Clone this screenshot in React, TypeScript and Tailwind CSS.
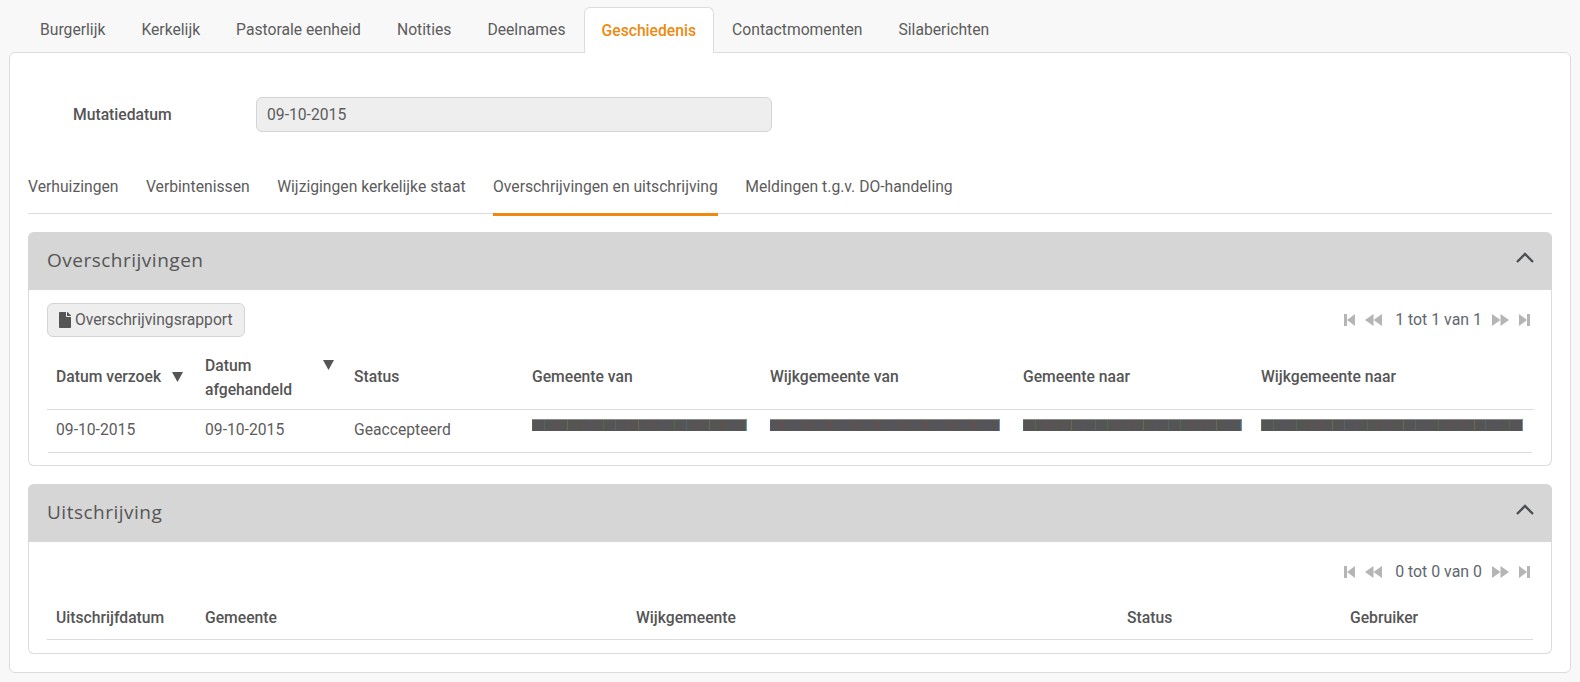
import { FaFile } from "react-icons/fa";

const mainTabs = ["Burgerlijk", "Kerkelijk", "Pastorale eenheid", "Notities", "Deelnames", "Geschiedenis", "Contactmomenten", "Silaberichten"];
const subTabs = ["Verhuizingen", "Verbintenissen", "Wijzigingen kerkelijke staat", "Overschrijvingen en uitschrijving", "Meldingen t.g.v. DO-handeling"];

const stripeColors = ["#6b4a4a", "#4f6b4f", "#5b4f75", "#4f6670", "#6a6a4a", "#704a5a"];

// redacted cell: dark bar with thin coloured stripes
const Redacted = ({ width, seed }: { width: number; seed: number }) => {
    const stripes = [];
    for (let i = 0; i < Math.floor(width / 11); i++) {
        stripes.push(stripeColors[(i * 7 + seed + (i % 3) * seed) % stripeColors.length]);
    }
    return (
        <div className="flex justify-between h-3 bg-[#555555] border-t border-[#8a8a8a] border-r border-r-[#5b93c7] overflow-hidden" style={{ width }}>
            {stripes.map((c, i) => (
                <span key={i} className="w-px h-full" style={{ backgroundColor: c }} />
            ))}
        </div>
    );
};

const Pager = ({ label }: { label: string }) => (
    <div className="flex items-center justify-end h-[34px] pr-[21px] text-[#5f6770]">
        <svg width="11" height="12" viewBox="0 0 11 12" fill="#b5b5b5"><rect x="0" y="0" width="3" height="12" /><polygon points="11,0 11,12 3,6" /></svg>
        <svg width="17" height="12" viewBox="0 0 17 12" fill="#b5b5b5" className="ml-[10px]"><polygon points="8.5,0 8.5,12 0,6" /><polygon points="17,0 17,12 8.5,6" /></svg>
        <span className="ml-[13px] mr-[10px] leading-none text-[15.9px]">{label}</span>
        <svg width="17" height="12" viewBox="0 0 17 12" fill="#b5b5b5"><polygon points="0,0 0,12 8.5,6" /><polygon points="8.5,0 8.5,12 17,6" /></svg>
        <svg width="11" height="12" viewBox="0 0 11 12" fill="#b5b5b5" className="ml-[10px]"><polygon points="0,0 0,12 8,6" /><rect x="8" y="0" width="3" height="12" /></svg>
    </div>
);

const SectionHeader = ({ title }: { title: string }) => (
    <div className="flex items-center justify-between h-[58px] -mx-px bg-[#d6d6d6] rounded-t-[6px] pl-[19px] pr-[17px]">
        <h2 className="text-[19px] tracking-[0.5px] text-[#555555] font-['Open_Sans',sans-serif] mb-[2px]">{title}</h2>
        <svg width="20" height="12" viewBox="0 0 20 12" fill="none" stroke="#4a4f55" strokeWidth="2.4" className="mb-[8px]"><path d="M2 11 L10 3 L18 11" /></svg>
    </div>
);

const SortArrow = () => (
    <svg width="11" height="10" viewBox="0 0 11 10" fill="#555555"><polygon points="0,0 11,0 5.5,10" /></svg>
);

export default function App() {
    return (
        <main className="h-[682px] bg-[#f8f8f8] px-[9px] pt-[7px] font-['Roboto',sans-serif] text-[15.7px] text-[#5c5c5c] overflow-hidden">
            <nav className="flex pl-[13px] relative z-10">
                {mainTabs.map((t) =>
                    t === "Geschiedenis" ? (
                        <div key={t} className="h-[46px] px-[17px] flex items-center bg-white border border-[#dcdcdc] border-b-0 rounded-t-[6px] font-medium text-[#ee8a0e] -mb-px">
                            {t}
                        </div>
                    ) : (
                        <div key={t} className="h-[45px] px-[18px] flex items-center">{t}</div>
                    )
                )}
            </nav>
            <div className="h-[621px] bg-white border border-[#dcdcdc] rounded-[6px] px-[18px]">
                <div className="flex items-center pt-[44px]">
                    <label className="w-[228px] pl-[45px] font-medium text-[#555555]">Mutatiedatum</label>
                    <div className="w-[516px] h-[35px] flex items-center px-[10px] bg-[#eeeeee] border border-[#d4d4d4] rounded-[6px]">09-10-2015</div>
                </div>

                <div className="flex gap-x-[27.5px] h-[82px] border-b border-[#dcdcdc] items-end">
                    {subTabs.map((t) => (
                        <div key={t} className={t.startsWith("Overschrijvingen") ? "h-[50px] pt-[9px] border-b-[3px] border-[#ee8a0e] -mb-[3px]" : "h-[50px] pt-[12px]"}>{t}</div>
                    ))}
                </div>

                <section className="mt-[18px] h-[234px] border border-t-0 border-[#dcdcdc] rounded-[6px]">
                    <SectionHeader title="Overschrijvingen" />
                    <div className="flex items-center justify-between pl-[18px] pt-[13px]">
                        <button className="h-[34px] w-[198px] flex items-center gap-x-[4px] pl-[11px] bg-[#eeeeee] border border-[#d4d4d4] rounded-[6px]">
                            <FaFile className="w-3 h-4 text-[#555555]" /> Overschrijvingsrapport
                        </button>
                        <Pager label="1 tot 1 van 1" />
                    </div>
                    <div className="ml-[18px] mr-[17px]">
                        <div className="grid grid-cols-[149px_149px_179px_238px_253px_238px_1fr] h-[73px] items-center border-b border-[#dcdcdc] font-medium text-[#555555] leading-[24px]">
                            <div className="pl-[9px] flex items-center gap-x-[11px] pt-[8px]">Datum verzoek <SortArrow /></div>
                            <div className="pl-[9px] flex items-start justify-between pr-[11px] pt-[9px]"><span>Datum<br />afgehandeld</span><span className="block mt-[6px]"><SortArrow /></span></div>
                            <div className="pl-[9px] pt-[8px]">Status</div>
                            <div className="pl-[8px] pt-[8px]">Gemeente van</div>
                            <div className="pl-[8px] pt-[8px]">Wijkgemeente van</div>
                            <div className="pl-[8px] pt-[8px]">Gemeente naar</div>
                            <div className="pl-[8px] pt-[8px]">Wijkgemeente naar</div>
                        </div>
                        <div className="grid grid-cols-[148px_149px_179px_238px_253px_238px_1fr] h-[43px] ml-px mr-[2px] border-b border-[#dcdcdc]">
                            <div className="pl-[8px] pt-[8px]">09-10-2015</div>
                            <div className="pl-[9px] pt-[8px]">09-10-2015</div>
                            <div className="pl-[9px] pt-[8px]">Geaccepteerd</div>
                            <div className="pl-[8px] pt-[9px]"><Redacted width={215} seed={1} /></div>
                            <div className="pl-[8px] pt-[9px]"><Redacted width={230} seed={2} /></div>
                            <div className="pl-[8px] pt-[9px]"><Redacted width={219} seed={3} /></div>
                            <div className="pl-[8px] pt-[9px]"><Redacted width={262} seed={4} /></div>
                        </div>
                    </div>
                </section>

                <section className="mt-[18px] h-[170px] border border-t-0 border-[#dcdcdc] rounded-[6px]">
                    <SectionHeader title="Uitschrijving" />
                    <div className="pt-[13px]">
                        <Pager label="0 tot 0 van 0" />
                    </div>
                    <div className="ml-[18px] mr-[18px] grid grid-cols-[149px_432px_491px_223px_1fr] h-[51px] items-center border-b border-[#dcdcdc] font-medium text-[#555555] pt-[7px]">
                        <div className="pl-[9px]">Uitschrijfdatum</div>
                        <div className="pl-[9px]">Gemeente</div>
                        <div className="pl-[8px]">Wijkgemeente</div>
                        <div className="pl-[8px]">Status</div>
                        <div className="pl-[8px]">Gebruiker</div>
                    </div>
                </section>
            </div>
        </main>
    );
}
